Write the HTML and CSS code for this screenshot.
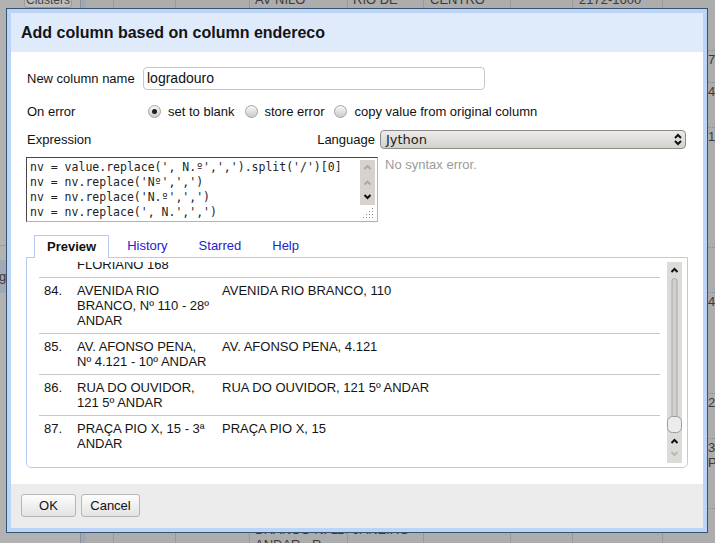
FILE: index.html
```html
<!DOCTYPE html>
<html>
<head>
<meta charset="utf-8">
<title>Add column</title>
<link rel="stylesheet" href="styles.css">
</head>
<body>
<div class="app">
  <div class="sidebar">
    <div class="sb-top"><div class="sb-btn">Clusters</div></div>
    <div class="sb-line"></div>
    <div class="sb-sel"><span class="sb-sel-text">ge</span></div>
  </div>
  <div class="divider"></div>
  <div class="grid">
    <div class="gcol w1"><div class="gtop">&nbsp;</div><div class="gbot">&nbsp;</div></div>
    <div class="gcol w2"><div class="gtop">&nbsp;</div><div class="gbot">&nbsp;</div></div>
    <div class="gcol w3"><div class="gtop">&nbsp;</div><div class="gbot">&nbsp;</div></div>
    <div class="gcol w4"><div class="gtop">AV NILO</div><div class="gbot">AV. RIO<br>BRANCO N. 110<br>ANDAR - R</div></div>
    <div class="gcol w5"><div class="gtop">RIO DE</div><div class="gbot">RIO DE<br>JANEIRO<br>&nbsp;</div></div>
    <div class="gcol w6"><div class="gtop">CENTRO</div><div class="gbot">&nbsp;</div></div>
    <div class="gcol w7"><div class="gtop">&nbsp;</div><div class="gbot">&nbsp;</div></div>
    <div class="gcol w8"><div class="gtop">2172-1600</div><div class="gbot">&nbsp;</div></div>
    <div class="gcol-last">
      <div class="cell h1"></div>
      <div class="cell h2">7</div>
      <div class="cell h3">4</div>
      <div class="cell h4">1</div>
      <div class="cell h5"></div>
      <div class="cell h6">4</div>
      <div class="cell h7">2</div>
      <div class="cell h8">3<br>P</div>
      <div class="cell h9"></div>
    </div>
  </div>
</div>

<div class="dialog">
  <div class="dlg-inner">
    <div class="dlg-header">Add column based on column endereco</div>
    <div class="dlg-body">
      <div class="frow r-name">
        <span class="lbl">New column name</span>
        <div class="input">logradouro</div>
      </div>
      <div class="frow r-err">
        <span class="lbl">On error</span>
        <div class="opts">
          <span class="opt"><span class="radio on"></span>set to blank</span>
          <span class="opt"><span class="radio"></span>store error</span>
          <span class="opt"><span class="radio"></span>copy value from original column</span>
        </div>
      </div>
      <div class="expr">
        <div class="expr-head"><span>Expression</span><span>Language</span></div>
        <div class="select">
          <span>Jython</span>
          <svg class="sel-arrows" width="8" height="13" viewBox="0 0 8 13"><path d="M1 5 L4 2 L7 5" stroke="#111" stroke-width="2" fill="none"/><path d="M1 8 L4 11 L7 8" stroke="#111" stroke-width="2" fill="none"/></svg>
        </div>
        <div class="code">
<pre>nv = value.replace(', N.º',',').split('/')[0]
nv = nv.replace('Nº',',')
nv = nv.replace('N.º',',')
nv = nv.replace(', N.',',')</pre>
          <svg class="code-sb" width="15" height="60" viewBox="0 0 15 60">
            <rect width="15" height="45" fill="#d6d3ce"/>
            <path d="M4.5 9 L7.5 6 L10.5 9" stroke="#a8a8a8" stroke-width="1.8" fill="none"/>
            <path d="M4.5 24.5 L7.5 21.5 L10.5 24.5" stroke="#a8a8a8" stroke-width="1.8" fill="none"/>
            <path d="M4.5 35 L7.5 38 L10.5 35" stroke="#111" stroke-width="2" fill="none"/>
            <g fill="#8a8a8a">
              <rect x="12" y="48" width="1" height="1"/>
              <rect x="12" y="51" width="1" height="1"/><rect x="9" y="51" width="1" height="1"/>
              <rect x="12" y="54" width="1" height="1"/><rect x="9" y="54" width="1" height="1"/><rect x="6" y="54" width="1" height="1"/>
              <rect x="12" y="57" width="1" height="1"/><rect x="9" y="57" width="1" height="1"/><rect x="6" y="57" width="1" height="1"/><rect x="3" y="57" width="1" height="1"/>
            </g>
          </svg>
        </div>
        <div class="status">No syntax error.</div>
      </div>
      <div class="tabs">
        <span class="tab active">Preview</span>
        <span class="tab">History</span>
        <span class="tab">Starred</span>
        <span class="tab">Help</span>
      </div>
      <div class="panel">
        <div class="pview">
          <div class="plist">
            <div class="prow"><span class="n"></span><span class="a">FLORIANO 168</span><span class="b"></span></div>
            <div class="prow"><span class="n">84.</span><span class="a">AVENIDA RIO BRANCO, Nº 110 - 28º ANDAR</span><span class="b">AVENIDA RIO BRANCO, 110</span></div>
            <div class="prow"><span class="n">85.</span><span class="a">AV. AFONSO PENA, Nº 4.121 - 10º ANDAR</span><span class="b">AV. AFONSO PENA, 4.121</span></div>
            <div class="prow"><span class="n">86.</span><span class="a">RUA DO OUVIDOR, 121 5º ANDAR</span><span class="b">RUA DO OUVIDOR, 121 5º ANDAR</span></div>
            <div class="prow"><span class="n">87.</span><span class="a">PRAÇA PIO X, 15 - 3ª ANDAR</span><span class="b">PRAÇA PIO X, 15</span></div>
          </div>
        </div>
        <svg class="psb" width="15" height="201" viewBox="0 0 15 201">
          <rect width="15" height="201" fill="#dddbd7"/>
          <path d="M4.5 10 L7.5 7 L10.5 10" stroke="#111" stroke-width="2" fill="none"/>
          <rect x="5" y="16.5" width="5" height="145" rx="2.5" fill="#d2d0cc" stroke="#a9a9a9"/>
          <rect x="0.5" y="154.5" width="14" height="16" rx="5" fill="#ececeb" stroke="#9b9b9b"/>
          <path d="M4.5 181 L7.5 178 L10.5 181" stroke="#111" stroke-width="2" fill="none"/>
          <path d="M4.5 190 L7.5 193 L10.5 190" stroke="#b8b8b8" stroke-width="2" fill="none"/>
        </svg>
      </div>
    </div>
    <div class="dlg-footer">
      <button class="btn btn-ok">OK</button>
      <button class="btn btn-cancel">Cancel</button>
    </div>
  </div>
</div>
</body>
</html>
```

FILE: styles.css
```css
* { box-sizing: border-box; }
html, body { margin: 0; padding: 0; }
body {
  width: 715px;
  height: 543px;
  overflow: hidden;
  position: relative;
  font-family: "Liberation Sans", Arial, sans-serif;
  font-size: 13px;
  color: #111;
  background: #adadad;
}

/* ---------- background application ---------- */
.app { display: flex; height: 543px; }
.sidebar {
  width: 81px;
  flex: none;
  background: #b2b2b2;
  border-right: 1px solid #8f8f8f;
  display: flex;
  flex-direction: column;
}
.sb-top { height: 8px; padding-left: 24px; }
.sb-btn {
  width: 48px;
  height: 16px;
  margin-top: -8px;
  border: 1px solid #999;
  border-radius: 3px;
  background: #bdbdbd;
  color: #444;
  font-size: 12px;
  line-height: 14px;
  text-align: center;
  overflow: hidden;
}
.sb-line { margin-top: 237px; border-top: 1px solid #9d9d9d; }
.sb-sel {
  margin-top: 14px;
  height: 33px;
  background: #a0a8b7;
  color: #3a3a3a;
  line-height: 33px;
  overflow: hidden;
}
.sb-sel-text { margin-left: -1px; }
.divider { width: 5px; flex: none; background: #9ea8b8; }
.grid { flex: 1; display: flex; background: #adadad; }
.gcol {
  flex: none;
  border-right: 1px solid #9a9a9a;
  display: flex;
  flex-direction: column;
  justify-content: space-between;
  color: #3b3b3b;
  line-height: 15px;
  padding-left: 5px;
  overflow: hidden;
  white-space: nowrap;
}
.gtop { margin-top: -8px; }
.gbot { margin-bottom: -9px; }
.w1 { width: 28px; }
.w2 { width: 62px; }
.w3 { width: 74px; }
.w4 { width: 98px; }
.w5 { width: 76px; }
.w6 { width: 87px; padding-left: 6px; }
.w7 { width: 62px; }
.w8 { width: 90px; padding-left: 6px; }
.gcol-last { flex: 1; display: flex; flex-direction: column; color: #3b3b3b; line-height: 15px; }
.cell { border-bottom: 1px dotted #8c8c8c; padding: 1px 0 0 45px; flex: none; overflow: hidden; }
.h1 { height: 51px; }
.h2 { height: 32px; }
.h3 { height: 45px; }
.h4 { height: 120px; }
.h5 { height: 45px; }
.h6 { height: 101px; }
.h7 { height: 45px; }
.h8 { height: 70px; }
.h9 { flex: 1; border-bottom: none; }

/* ---------- dialog ---------- */
.dialog {
  position: absolute;
  left: 6px;
  top: 8px;
  width: 702px;
  height: 525px;
  border: 1px solid #36536f;
  background: #bcd4f8;
  padding: 4px;
}
.dlg-inner {
  height: 100%;
  display: flex;
  flex-direction: column;
  background: #fff;
}
.dlg-header {
  height: 39px;
  flex: none;
  background: #dfeafb;
  display: flex;
  align-items: center;
  padding-left: 10px;
  font-weight: bold;
  font-size: 16px;
  color: #141414;
}
.dlg-body { flex: 1; padding: 15px 15px 0; }
.dlg-footer {
  height: 44px;
  flex: none;
  background: #ececec;
  padding: 10px 10px 0;
  display: flex;
  gap: 5px;
  align-items: flex-start;
}
.btn {
  height: 23px;
  border: 1px solid #b6b6b6;
  border-radius: 3px;
  background: linear-gradient(#fdfdfd, #e3e3e3);
  font: 13px "Liberation Sans", Arial, sans-serif;
  color: #111;
  padding: 0;
  display: flex;
  align-items: center;
  justify-content: center;
}
.btn-ok { width: 55px; }
.btn-cancel { width: 59px; }

/* form rows */
.frow { display: flex; align-items: center; }
.lbl { width: 117px; flex: none; padding-left: 1px; }
.r-name { height: 23px; }
.input {
  width: 342px;
  height: 23px;
  border: 1px solid #c6c6c6;
  border-radius: 4px;
  padding-left: 3px;
  font-size: 14px;
  line-height: 21px;
  color: #111;
}
.r-err { height: 20px; margin-top: 11px; }
.opts { display: flex; align-items: center; padding-left: 5px; }
.opt { display: flex; align-items: center; margin-right: 10px; }
.radio {
  width: 13px;
  height: 13px;
  border-radius: 50%;
  border: 1px solid #a4a4a4;
  background: linear-gradient(#f7f7f7, #cbcbcb);
  margin-right: 7px;
  display: flex;
  align-items: center;
  justify-content: center;
}
.radio.on::after {
  content: "";
  width: 5px;
  height: 5px;
  border-radius: 50%;
  background: #1e1e1e;
}

/* expression */
.expr {
  display: grid;
  grid-template-columns: 352px 1fr;
  column-gap: 2px;
  row-gap: 8px;
  margin-top: 9px;
}
.expr-head {
  display: flex;
  justify-content: space-between;
  align-items: center;
  height: 19px;
  padding: 0 3px 0 1px;
}
.select {
  height: 19px;
  margin-right: 2px;
  border: 1px solid #8c8c8c;
  border-radius: 4px;
  background: linear-gradient(#ecebe8, #d4d1cc);
  display: flex;
  align-items: center;
  justify-content: space-between;
  padding: 0 3px 0 5px;
  font-family: "DejaVu Sans", sans-serif;
  font-size: 13px;
  color: #222;
}
.sel-arrows { display: block; }
.code {
  height: 65px;
  border: 1px solid;
  border-color: #474747 #b3b3b3 #b3b3b3 #474747;
  display: flex;
}
.code pre {
  flex: 1;
  margin: 0;
  padding: 2px 0 0 3px;
  font-family: "DejaVu Sans Mono", monospace;
  font-size: 11.5px;
  line-height: 15px;
  color: #222;
  overflow: hidden;
  white-space: pre;
}
.code-sb { flex: none; margin: 2px 2px 0 0; display: block; }
.status { color: #9b9b9b; padding-left: 5px; line-height: 15px; }

/* tabs */
.tabs {
  display: flex;
  margin-top: 13px;
  padding-left: 8px;
  height: 22px;
  position: relative;
  z-index: 1;
}
.tab {
  padding: 0 13px;
  margin-right: 5px;
  line-height: 22px;
  color: #2323cf;
}
.tab.active {
  padding: 0 12px;
  height: 23px;
  border: 1px solid #b5cbf2;
  border-bottom: none;
  background: #fff;
  font-weight: bold;
  color: #111;
  line-height: 21px;
}

/* preview panel */
.panel {
  height: 211px;
  border: 1px solid #b5cbf2;
  border-radius: 0 0 5px 5px;
  display: flex;
  align-items: flex-start;
  padding: 0 5px 0 12px;
}
.pview { flex: 1; height: 203px; margin-top: 4px; overflow: hidden; margin-right: 7px; }
.plist { margin-top: -10px; }
.prow {
  display: grid;
  grid-template-columns: 38px 145px 1fr;
  padding: 5px 0;
  line-height: 15px;
  color: #141414;
}
.prow + .prow { border-top: 1px solid #c8c8c8; }
.prow .n { padding-left: 5px; }
.prow .a { padding-right: 9px; }
.psb { flex: none; margin-top: 4px; display: block; }
```
